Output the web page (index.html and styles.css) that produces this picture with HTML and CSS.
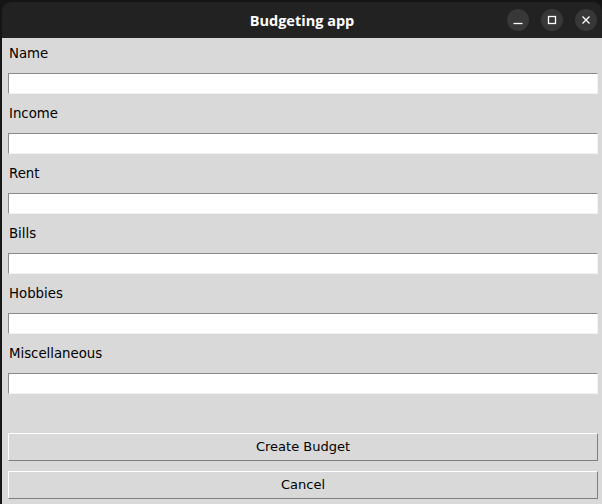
FILE: index.html
```html
<!DOCTYPE html>
<html>
<head>
<meta charset="utf-8">
<title>Budgeting app</title>
<link rel="stylesheet" href="styles.css">
</head>
<body>
<div class="window">
  <div class="titlebar">
    <span class="title">Budgeting app</span>
    <div class="controls">
      <span class="ctl"><svg width="22" height="22" viewBox="0 0 22 22"><path d="M6.5 14.5h9" stroke="#fff" stroke-width="1.3" fill="none"/></svg></span>
      <span class="ctl"><svg width="22" height="22" viewBox="0 0 22 22"><rect x="7.5" y="7.5" width="7" height="7" stroke="#fff" stroke-width="1.3" fill="none"/></svg></span>
      <span class="ctl"><svg width="22" height="22" viewBox="0 0 22 22"><path d="M7.5 7.5l7 7M14.5 7.5l-7 7" stroke="#fff" stroke-width="1.3" fill="none"/></svg></span>
    </div>
  </div>
  <div class="content">
    <div class="field"><label class="label">Name</label><input class="entry" type="text"></div>
    <div class="field"><label class="label">Income</label><input class="entry" type="text"></div>
    <div class="field"><label class="label">Rent</label><input class="entry" type="text"></div>
    <div class="field"><label class="label">Bills</label><input class="entry" type="text"></div>
    <div class="field"><label class="label">Hobbies</label><input class="entry" type="text"></div>
    <div class="field"><label class="label">Miscellaneous</label><input class="entry" type="text"></div>
    <div class="buttons">
      <button class="btn">Create Budget</button>
      <button class="btn">Cancel</button>
    </div>
  </div>
</div>
</body>
</html>
```
FILE: styles.css
```css
html, body {
  margin: 0;
  padding: 0;
  background: #151515;
}
.window {
  width: 602px;
  height: 504px;
  display: flex;
  flex-direction: column;
  overflow: hidden;
}
.titlebar {
  height: 36px;
  margin-top: 2px;
  margin-left: 2px;
  background: #222222;
  border-radius: 9px 9px 0 0;
  display: flex;
  align-items: center;
  justify-content: center;
  position: relative;
  flex: none;
}
.title {
  color: #ffffff;
  font-family: "Open Sans", sans-serif;
  font-weight: 700;
  font-size: 14.5px;
}
.controls {
  position: absolute;
  right: 5px;
  top: 7px;
  display: flex;
  gap: 12px;
}
.ctl {
  width: 22px;
  height: 22px;
  border-radius: 50%;
  background: #383838;
  display: block;
}
.ctl svg { display: block; }
.content {
  flex: 1;
  margin-left: 2px;
  background: #d9d9d9;
  padding: 6px 4px 0 6px;
  font-family: "DejaVu Sans", sans-serif;
  font-size: 13.3px;
  color: #000;
}
.field {
  display: flex;
  flex-direction: column;
  margin-bottom: 10px;
}
.label {
  display: block;
  line-height: 16px;
  height: 16px;
  margin-top: 2px;
  margin-bottom: 11px;
  padding-left: 1px;
}
.entry {
  box-sizing: border-box;
  width: 590px;
  height: 21px;
  margin: 0;
  padding: 0 2px;
  background: #ffffff;
  border: 1px solid;
  border-color: #8a8a8a #f2f2f2 #f2f2f2 #8a8a8a;
  font-family: "DejaVu Sans", sans-serif;
  font-size: 13px;
  outline: none;
}
.buttons {
  padding-top: 29px;
  display: flex;
  flex-direction: column;
  gap: 10px;
}
.btn {
  box-sizing: border-box;
  width: 590px;
  height: 28px;
  margin: 0;
  padding: 0 0 2px 0;
  background: #d9d9d9;
  border: 1px solid;
  border-color: #ffffff #7f7f7f #7f7f7f #ffffff;
  font-family: "DejaVu Sans", sans-serif;
  font-size: 13px;
  color: #000;
}
```
